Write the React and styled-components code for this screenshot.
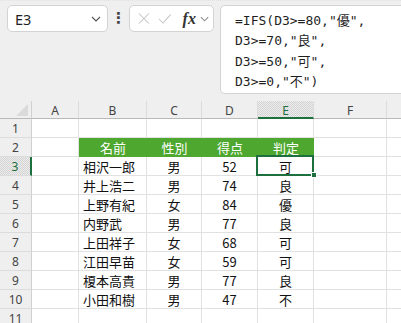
import React from 'react';
import styled, { createGlobalStyle } from 'styled-components';

const GlobalStyle = createGlobalStyle`
  html, body {
    margin: 0;
    padding: 0;
    background: #ffffff;
  }
  #root {
    width: 401px;
    height: 323px;
    overflow: hidden;
  }
`;

const columns = ['A', 'B', 'C', 'D', 'E', 'F', 'G'];

const people = [
  { name: '相沢一郎', sex: '男', score: 52, grade: '可' },
  { name: '井上浩二', sex: '男', score: 74, grade: '良' },
  { name: '上野有紀', sex: '女', score: 84, grade: '優' },
  { name: '内野武', sex: '男', score: 77, grade: '良' },
  { name: '上田祥子', sex: '女', score: 68, grade: '可' },
  { name: '江田早苗', sex: '女', score: 59, grade: '可' },
  { name: '榎本高貴', sex: '男', score: 77, grade: '良' },
  { name: '小田和樹', sex: '男', score: 47, grade: '不' },
];

function Chevron({ color = '#555' }) {
  return (
    <svg width="10" height="6" viewBox="0 0 10 6">
      <path d="M1 1 L5 5 L9 1" fill="none" stroke={color} strokeWidth="1.1" />
    </svg>
  );
}

function App() {
  const rows = [
    { n: 1, cells: [] },
    { n: 2, head: true, cells: ['名前', '性別', '得点', '判定'] },
    ...people.map((p, i) => ({ n: i + 3, cells: [p.name, p.sex, p.score, p.grade] })),
    { n: 11, cells: [] },
  ];

  return (
    <Page>
      <GlobalStyle />
      <Toolbar>
        <NameBox>
          <span>E3</span>
          <Chevron />
        </NameBox>
        <Dots>⋮</Dots>
        <FxBox>
          <svg width="13" height="13" viewBox="0 0 13 13">
            <path d="M1 1 L12 12 M12 1 L1 12" stroke="#c4c4c4" strokeWidth="1.1" />
          </svg>
          <svg width="15" height="12" viewBox="0 0 15 12">
            <path d="M1 6 L5.5 10.5 L14 1" fill="none" stroke="#c4c4c4" strokeWidth="1.1" />
          </svg>
          <Fx>fx</Fx>
          <Chevron color="#8a8a8a" />
        </FxBox>
        <Formula>
          <div>=IFS(D3&gt;=80,"優",</div>
          <div>D3&gt;=70,"良",</div>
          <div>D3&gt;=50,"可",</div>
          <div>D3&gt;=0,"不")</div>
        </Formula>
      </Toolbar>

      <Sheet>
        <Corner />
        {columns.map((c) => (
          <ColHead key={c} $selected={c === 'E'}>{c}</ColHead>
        ))}
        {rows.map((r) => (
          <React.Fragment key={r.n}>
            <RowHead $selected={r.n === 3}>{r.n}</RowHead>
            <Cell />
            {[0, 1, 2, 3].map((i) =>
              r.head ? (
                <HeadCell key={i}>{r.cells[i]}</HeadCell>
              ) : (
                <Cell
                  key={i}
                  $align={i === 0 ? 'left' : 'center'}
                  $active={r.n === 3 && i === 3}
                >
                  {r.cells[i]}
                </Cell>
              )
            )}
            <Cell />
            <Cell />
          </React.Fragment>
        ))}
      </Sheet>
    </Page>
  );
}

const Page = styled.div`
  width: 401px;
  height: 323px;
  overflow: hidden;
  background: #efefef;
`;

const Toolbar = styled.div`
  display: flex;
  align-items: flex-start;
  height: 101px;
  padding: 4px 0 0 7px;
  box-sizing: border-box;
  border-top: 1px dotted #e2e2e2;
`;

const Box = styled.div`
  box-sizing: border-box;
  background: #ffffff;
  border: 1px solid #d3d3d3;
  border-radius: 5px;
  height: 27px;
  display: flex;
  align-items: center;
`;

const NameBox = styled(Box)`
  width: 101px;
  padding: 0 6px 0 7px;
  justify-content: space-between;
  font-family: 'Noto Sans', sans-serif;
  font-size: 14.5px;
  color: #1f1f1f;
`;

const Dots = styled.div`
  width: 21px;
  text-align: center;
  font-family: 'DejaVu Sans', sans-serif;
  font-size: 15px;
  font-weight: bold;
  line-height: 27px;
  color: #444;
`;

const FxBox = styled(Box)`
  width: 85px;
  padding: 0 4px 0 8px;
  gap: 8px;
`;

const Fx = styled.span`
  font-family: 'Liberation Serif', serif;
  font-style: italic;
  font-weight: bold;
  font-size: 16px;
  color: #333;
  margin-left: 3px;
  margin-right: -4px;
`;

const Formula = styled(Box)`
  flex: 1;
  margin-left: 6px;
  height: 89px;
  margin-right: -20px;
  display: block;
  padding: 5px 14px;
  font-family: 'DejaVu Sans Mono', 'Noto Sans CJK JP', monospace;
  font-size: 13px;
  line-height: 20.3px;
  color: #1f1f1f;
`;

const Sheet = styled.div`
  display: grid;
  grid-template-columns: 32px 47px 68px 55px 56px 56px 73px 100px;
  grid-template-rows: 18px repeat(11, 19px);
  background: #ffffff;
  font-family: 'Noto Sans CJK JP', sans-serif;
  font-size: 13px;
  color: #111;
`;

const selectedBg = `
  background: repeating-conic-gradient(#d4d4d4 0 25%, #ececec 0 50%) 0 0 / 2px 2px;
`;

const Corner = styled.div`
  position: relative;
  background: #efefef;
  border-right: 1px solid #d0d0d0;
  border-bottom: 1px solid #b9b9b9;
  &::after {
    content: '';
    position: absolute;
    right: 3px;
    bottom: 2px;
    border-style: solid;
    border-width: 0 0 12px 12px;
    border-color: transparent transparent #dadada transparent;
  }
`;

const ColHead = styled.div`
  box-sizing: border-box;
  background: #efefef;
  ${(p) => p.$selected && selectedBg}
  border-right: 1px solid #dcdcdc;
  border-bottom: ${(p) => (p.$selected ? '2px solid #1e6f3e' : '1px solid #b9b9b9')};
  display: flex;
  align-items: center;
  justify-content: center;
  font-family: 'Noto Sans', sans-serif;
  font-size: 12px;
  color: ${(p) => (p.$selected ? '#1e6f3e' : '#444')};
  padding-top: ${(p) => (p.$selected ? '3px' : '2px')};
`;

const RowHead = styled.div`
  box-sizing: border-box;
  background: #efefef;
  ${(p) => p.$selected && selectedBg}
  border-right: ${(p) => (p.$selected ? '2px solid #1e6f3e' : '1px solid #d0d0d0')};
  border-bottom: 1px solid #dcdcdc;
  display: flex;
  align-items: center;
  justify-content: center;
  font-family: 'Noto Sans', sans-serif;
  font-size: 12px;
  color: ${(p) => (p.$selected ? '#1e6f3e' : '#444')};
`;

const Cell = styled.div`
  position: relative;
  box-sizing: border-box;
  border-right: 1px solid #e1e1e1;
  border-bottom: 1px solid #e1e1e1;
  display: flex;
  align-items: center;
  justify-content: ${(p) => (p.$align === 'left' ? 'flex-start' : 'center')};
  padding-left: ${(p) => (p.$align === 'left' ? '4px' : '0')};
  white-space: nowrap;
  &::after {
    content: '';
    display: ${(p) => (p.$active ? 'block' : 'none')};
    position: absolute;
    left: -2px;
    top: -2px;
    right: -1px;
    bottom: -1px;
    border: 2px solid #1e6f3e;
  }
  &::before {
    content: '';
    display: ${(p) => (p.$active ? 'block' : 'none')};
    position: absolute;
    right: -4px;
    bottom: -3px;
    width: 6px;
    height: 6px;
    background: #1e6f3e;
    border: 1px solid #ffffff;
    box-sizing: border-box;
    z-index: 2;
  }
`;

const HeadCell = styled.div`
  background: #4ea72e;
  color: #ffffff;
  display: flex;
  align-items: center;
  justify-content: center;
  border-bottom: 1px solid #4ea72e;
`;

export default App;
